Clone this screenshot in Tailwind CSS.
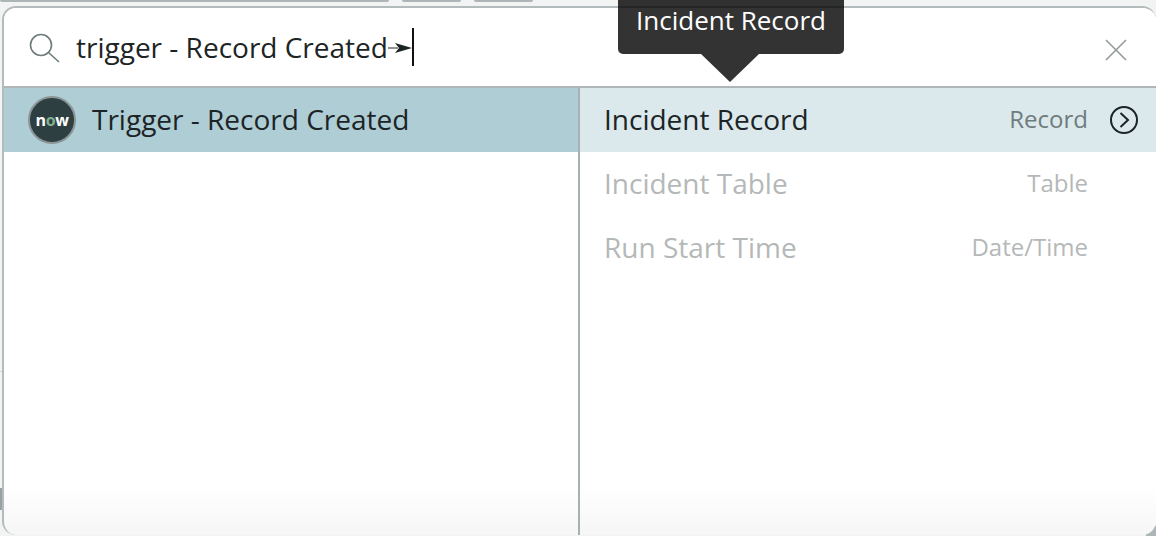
<!DOCTYPE html>
<html lang="en">
<head>
    <meta charset="UTF-8">
    <title>Pill Picker</title>
    <script src="https://cdn.jsdelivr.net/npm/@tailwindcss/browser@4"></script>
</head>
<body class="bg-[#f2f3f3] h-[536px] w-[1156px] overflow-hidden font-['Open_Sans',sans-serif]">
    <div class="relative h-[536px] overflow-hidden">
        <!-- Page behind the picker -->
        <div class="flex h-[2px]">
            <div class="w-[389px] bg-[#aeb5b7] rounded-b"></div>
            <div class="w-[59px] ml-[13px] bg-[#aeb5b7] rounded-b"></div>
            <div class="w-[59px] ml-[13px] bg-[#aeb5b7] rounded-b"></div>
        </div>
        <div class="absolute left-0 top-[371px] w-[2px] h-[1px] bg-[#d5d8d8]"></div>
        <div class="absolute left-0 top-[488px] w-[2px] h-[22px] bg-[#9aa1a3]"></div>
        <div class="absolute right-0 bottom-0 w-[10px] h-[10px] bg-[#aeb5b7]"></div>

        <!-- Picker -->
        <div class="relative ml-[2px] mt-[4px] h-[529px] flex flex-col rounded-[14px] border-t-2 border-l-2 border-[#b4bbbd] overflow-hidden bg-gradient-to-b from-white from-[91%] to-[#f6f6f6]">
            <div class="h-[80px] flex items-center pl-[24px] pr-[29px] border-b-2 border-[#b0b6b8] shrink-0 bg-white">
                <svg class="w-[32px] h-[32px] shrink-0" viewBox="0 0 32 32" fill="none" stroke="#6f7c7c" stroke-width="1.6">
                    <circle cx="13" cy="14" r="10.5"/>
                    <path d="M20.5 21.5 L31 31"/>
                </svg>
                <span class="ml-[16px] text-[28px] leading-none text-[#1c2425]">trigger - Record Created</span>
                <svg class="w-[24px] h-[12px] mt-[2px] shrink-0" viewBox="0 0 24 12" fill="#1c2425">
                    <path d="M0 6 H10" stroke="#1c2425" stroke-width="1"/>
                    <path d="M7 1 L24 6 L7 11 L11 6 Z"/>
                </svg>
                <span class="w-[2px] h-[38px] bg-[#111]"></span>
                <svg class="ml-auto mt-[6px] w-[22px] h-[22px]" viewBox="0 0 22 22" stroke="#949a9a" stroke-width="1.6" fill="none">
                    <path d="M1 1 L21 21 M21 1 L1 21"/>
                </svg>
            </div>
            <div class="flex flex-1">
                <div class="w-[576px] border-r-2 border-[#a9b0b2]">
                    <div class="h-[64px] bg-[#aecdd5] flex items-center pl-[24px]">
                        <div class="w-[48px] h-[48px] rounded-full bg-[#2e3f42] border-2 border-[#8b9496] flex items-center justify-center text-white font-bold text-[16px] tracking-tight shrink-0">n<span class="text-[#7fb08f]">o</span>w</div>
                        <span class="ml-[16px] mb-[2px] text-[28px] text-[#1c2425]">Trigger - Record Created</span>
                    </div>
                </div>
                <div class="flex-1">
                    <div class="h-[64px] bg-[#dbe8ec] flex items-center pl-[24px] pr-[17px]">
                        <span class="mb-[2px] text-[28px] text-[#1c2425]">Incident Record</span>
                        <span class="ml-auto mb-[2px] text-[24px] text-[#6f7c7c]">Record</span>
                        <svg class="ml-[21px] w-[30px] h-[30px]" viewBox="0 0 30 30" fill="none" stroke="#1c2425" stroke-width="2">
                            <circle cx="15" cy="15" r="13"/>
                            <path d="M11.5 8 L19 15 L11.5 22"/>
                        </svg>
                    </div>
                    <div class="h-[64px] flex items-center pl-[24px] pr-[68px] text-[#b5b8b8]">
                        <span class="mb-[2px] text-[28px]">Incident Table</span>
                        <span class="ml-auto mb-[2px] text-[24px]">Table</span>
                    </div>
                    <div class="h-[64px] flex items-center pl-[24px] pr-[68px] text-[#b5b8b8]">
                        <span class="mb-[2px] text-[28px]">Run Start Time</span>
                        <span class="ml-auto mb-[2px] text-[24px]">Date/Time</span>
                    </div>
                </div>
            </div>
        </div>

        <!-- Tooltip -->
        <div class="absolute left-[618px] top-0 w-[226px] h-[54px] bg-black/80 rounded-b-[5px] text-white text-[26px] text-center leading-[40px]">Incident Record</div>
        <div class="absolute left-[701px] top-[54px] w-0 h-0 border-l-[29px] border-r-[29px] border-t-[28px] border-l-transparent border-r-transparent border-t-[#333333]"></div>
    </div>
</body>
</html>
